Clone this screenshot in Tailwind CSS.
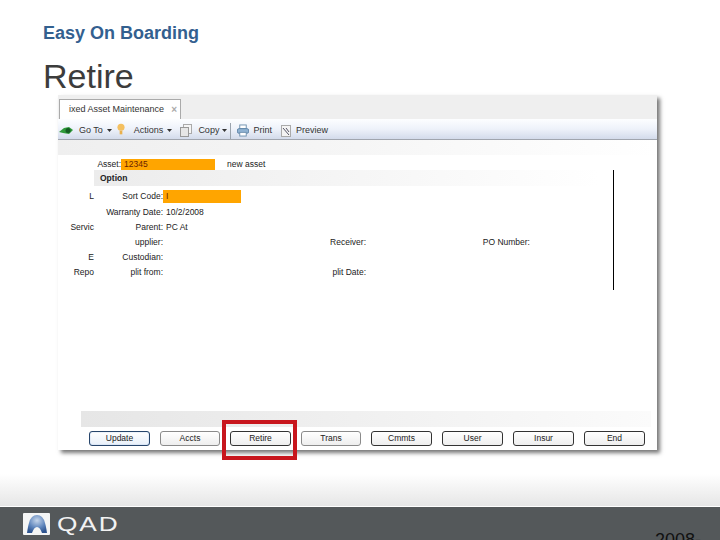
<!DOCTYPE html>
<html lang="en">
<head>
    <meta charset="UTF-8">
    <title>Retire</title>
    <script src="https://cdn.jsdelivr.net/npm/@tailwindcss/browser@4"></script>
</head>
<body class="relative w-[720px] h-[540px] overflow-hidden bg-white font-['Liberation_Sans',Arial,sans-serif] flex flex-col">
    <!-- slide heading -->
    <div class="pl-[43px] pt-[22px]">
        <h2 class="text-[18px] leading-[22px] font-bold text-[#33608f]">Easy On Boarding</h2>
        <h1 class="mt-[13px] text-[34px] leading-[38px] text-[#3c3c3c]">Retire</h1>
    </div>

    <!-- app window -->
    <div class="ml-[58px] w-[599px] h-[355px] bg-white shadow-[3px_3px_4px_#777] flex flex-col text-[8.5px] text-[#222]">
        <div class="h-[24px] bg-[#efefef] pt-[4px] pl-[1px] shrink-0">
            <div class="w-[122px] h-[20px] bg-white border border-b-0 border-[#aaa] flex items-center justify-between pl-[9px] pr-[3px] text-[#333]">
                <span class="text-[9px] whitespace-nowrap">ixed Asset Maintenance</span>
                <span class="text-[#aaa] text-[10px] font-bold leading-none">×</span>
            </div>
        </div>
        <div class="h-[21px] shrink-0 pt-[3px] bg-gradient-to-b from-[#fdfeff] via-[#eef2fa] to-[#d3dbeb] border-b border-[#a0a5ae] flex items-center text-[9px] text-[#333]">
            <svg class="w-[14px] h-[9px] ml-[1px]" viewBox="0 0 14 9"><path d="M0 6 L5 2 L10 1 L14 4 L10 8 L4 7 Z" fill="#2f9a3a"/><circle cx="9" cy="4.500" r="2.500" fill="#145c22"/></svg>
            <span class="ml-[6px]">Go To</span>
            <svg class="w-[5px] h-[3px] ml-[4px]" viewBox="0 0 5 3"><path d="M0 0H5L2.500 3Z" fill="#333"/></svg>
            <svg class="w-[8px] h-[14px] ml-[5px] mb-[3px]" viewBox="0 0 9 14"><circle cx="4.500" cy="5" r="4" fill="#f4c060"/><rect x="3" y="9" width="3" height="4" fill="#e9b04c"/></svg>
            <span class="ml-[9px]">Actions</span>
            <svg class="w-[5px] h-[3px] ml-[4px]" viewBox="0 0 5 3"><path d="M0 0H5L2.500 3Z" fill="#333"/></svg>
            <svg class="w-[12px] h-[13px] ml-[8px]" viewBox="0 0 12 13"><rect x="3.500" y="0.500" width="8" height="9" fill="#f5f5f5" stroke="#aaa"/><rect x="0.500" y="3.500" width="8" height="9" fill="#e6e6e6" stroke="#999"/></svg>
            <span class="ml-[6px]">Copy</span>
            <svg class="w-[5px] h-[3px] ml-[3px]" viewBox="0 0 5 3"><path d="M0 0H5L2.500 3Z" fill="#333"/></svg>
            <div class="w-px h-[16px] bg-[#9aa3ad] ml-[3px]"></div>
            <svg class="w-[12px] h-[13px] ml-[6px]" viewBox="0 0 13 13"><rect x="3" y="0.500" width="7" height="4" fill="#fff" stroke="#6c8fae"/><rect x="0.500" y="4.500" width="12" height="5" rx="1.500" fill="#8fb2d2" stroke="#5d84a8"/><rect x="3" y="8.500" width="7" height="4" fill="#fff" stroke="#6c8fae"/></svg>
            <span class="ml-[4px]">Print</span>
            <svg class="w-[10px] h-[12px] ml-[9px]" viewBox="0 0 10 12"><rect x="0.500" y="0.500" width="9" height="11" fill="#f4f4f4" stroke="#aaa"/><path d="M2 3L8 10M5 3L8 7" stroke="#556" stroke-width="1"/></svg>
            <span class="ml-[5px]">Preview</span>
        </div>
        <div class="h-[15px] shrink-0 bg-gradient-to-r from-[#efefef] via-[#f6f6f6] to-white"></div>

        <!-- form area, black rule sits over the right of it -->
        <div class="relative flex-1 flex flex-col">
            <div class="flex items-end h-[15px] pl-[39px]">
                <span class="w-[24px] text-right leading-[11px] whitespace-nowrap">Asset:</span>
                <div class="w-[94px] h-[11px] bg-[#ffa500] pl-[3px] leading-[11px] text-[#6a1f00]">12345</div>
                <span class="ml-[12px] leading-[11px]">new asset</span>
            </div>
            <div class="ml-[36px] w-[506px] h-[16px] bg-gradient-to-r from-[#ececec] to-white pl-[6px] font-bold text-[8.5px] leading-[16px]">Option</div>
            <div class="flex items-center h-[19px] pt-[2px]">
                <span class="w-[36px] text-right">L</span>
                <span class="w-[69px] text-right">Sort Code:</span>
                <div class="w-[78px] h-[13px] bg-[#ffa500] pl-[3px] leading-[13px] text-[#6a1f00]">I</div>
            </div>
            <div class="flex items-center h-[15px]">
                <span class="w-[36px]"></span>
                <span class="w-[69px] text-right">Warranty Date:</span>
                <span class="ml-[3px]">10/2/2008</span>
            </div>
            <div class="flex items-center h-[15px]">
                <span class="w-[36px] text-right whitespace-nowrap">Servic</span>
                <span class="w-[69px] text-right">Parent:</span>
                <span class="ml-[3px]">PC At</span>
            </div>
            <div class="flex items-center h-[15px]">
                <span class="w-[36px]"></span>
                <span class="w-[69px] text-right">upplier:</span>
                <span class="w-[203px] text-right">Receiver:</span>
                <span class="w-[164px] text-right">PO Number:</span>
            </div>
            <div class="flex items-center h-[15px]">
                <span class="w-[36px] text-right">E</span>
                <span class="w-[69px] text-right">Custodian:</span>
            </div>
            <div class="flex items-center h-[15px]">
                <span class="w-[36px] text-right">Repo</span>
                <span class="w-[69px] text-right">plit from:</span>
                <span class="w-[203px] text-right">plit Date:</span>
            </div>
            <div class="absolute left-[555px] top-[15px] w-px h-[120px] bg-black"></div>
        </div>

        <div class="ml-[23px] w-[570px] h-[16px] shrink-0 bg-gradient-to-r from-[#e6e6e6] to-[#fbfbfb]"></div>
        <div class="h-[23px] shrink-0 pl-[31px] pt-[4px] flex items-start gap-[10px] text-[8.5px]">
            <button class="w-[61px] h-[15px] rounded-[3px] border border-[#27456b] bg-gradient-to-b from-white to-[#e8f0fa] shadow-[inset_0_0_1px_#5d8fd0]">Update</button>
            <button class="w-[60px] h-[15px] rounded-[3px] border border-[#8a8a8a] bg-gradient-to-b from-white to-[#eee]">Accts</button>
            <button class="w-[61px] h-[15px] rounded-[3px] border border-[#333] bg-gradient-to-b from-white to-[#eee]">Retire</button>
            <button class="w-[60px] h-[15px] rounded-[3px] border border-[#8a8a8a] bg-gradient-to-b from-white to-[#eee]">Trans</button>
            <button class="w-[61px] h-[15px] rounded-[3px] border border-[#333] bg-gradient-to-b from-white to-[#eee]">Cmmts</button>
            <button class="w-[61px] h-[15px] rounded-[3px] border border-[#333] bg-gradient-to-b from-white to-[#eee]">User</button>
            <button class="w-[61px] h-[15px] rounded-[3px] border border-[#333] bg-gradient-to-b from-white to-[#eee]">Insur</button>
            <button class="w-[61px] h-[15px] rounded-[3px] border border-[#333] bg-gradient-to-b from-white to-[#eee]">End</button>
        </div>
    </div>

    <!-- highlight round the Retire button -->
    <div class="absolute left-[222px] top-[420px] w-[75px] h-[40px] border-[4px] border-[#c8161d]"></div>

    <!-- footer -->
    <div class="mt-auto h-[32px] shrink-0 bg-gradient-to-b from-white to-[#e6e6e6]"></div>
    <div class="h-[1px] shrink-0 bg-white"></div>
    <div class="relative h-[33px] shrink-0 bg-[#54585a] flex items-center pl-[23px]">
        <svg class="w-[27px] h-[22px]" viewBox="0 0 27 22">
            <defs><radialGradient id="ball" cx="0.500" cy="0.300" r="0.700"><stop offset="0" stop-color="#c5d5ea"/><stop offset="0.600" stop-color="#5f86bd"/><stop offset="1" stop-color="#2f5590"/></radialGradient></defs>
            <rect width="27" height="22" rx="1" fill="#f4f5f5"/>
            <path d="M4 20 Q5 13 6 10 Q8 2 14 2 Q20 2 22 10 Q23 13 24 20 L19 20 Q17 14 14 14 Q11 14 9 20 Z" fill="url(#ball)"/>
        </svg>
        <span class="ml-[7px] text-[21px] leading-none tracking-[1.5px] text-[#f2f2f2] scale-x-125 origin-left">QAD</span>
        <span class="absolute left-[655px] top-[23px] text-[18px] leading-[20px] text-[#111]">2008-</span>
    </div>
</body>
</html>
